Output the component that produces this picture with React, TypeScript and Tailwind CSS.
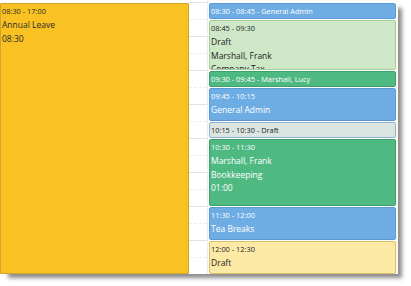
import React from "react";

type Appt = {
  slots: number;
  time: string;
  lines?: string[];
  inline?: string;
  tone: "blue" | "mint" | "green" | "mist" | "cream";
};

const tones = {
  blue: "bg-[#6eade4] border-[#5a98d6] text-white",
  mint: "bg-[#cde7c7] border-[#a0d098] text-[#1e1e1e]",
  green: "bg-[#4fb982] border-[#3f9f6b] text-white",
  mist: "bg-[#dbe5e1] border-[#8fb2d9] text-[#1e1e1e]",
  cream: "bg-[#fde9a6] border-[#d9bf68] text-[#1e1e1e]",
};

const appts: Appt[] = [
  { slots: 1, time: "08:30 - 08:45", inline: "General Admin", tone: "blue" },
  { slots: 3, time: "08:45 - 09:30", lines: ["Draft", "Marshall, Frank", "Company Tax"], tone: "mint" },
  { slots: 1, time: "09:30 - 09:45", inline: "Marshall, Lucy", tone: "green" },
  { slots: 2, time: "09:45 - 10:15", lines: ["General Admin", "00:30"], tone: "blue" },
  { slots: 1, time: "10:15 - 10:30", inline: "Draft", tone: "mist" },
  { slots: 4, time: "10:30 - 11:30", lines: ["Marshall, Frank", "Bookkeeping", "01:00"], tone: "green" },
  { slots: 2, time: "11:30 - 12:00", lines: ["Tea Breaks", "00:30"], tone: "blue" },
  { slots: 2, time: "12:00 - 12:30", lines: ["Draft", "Sick Leave"], tone: "cream" },
];

const heights: Record<number, string> = {
  1: "h-[16px]",
  2: "h-[33px]",
  3: "h-[50px]",
  4: "h-[67px]",
};

function Appointment({ a }: { a: Appt }) {
  return (
    <div
      className={`${tones[a.tone]} ${heights[a.slots]} mb-[1px] shrink-0 overflow-hidden rounded-[2px] border px-[1px]`}
    >
      {a.inline ? (
        <div className="text-[7.4px] leading-[14px] whitespace-nowrap">
          {a.time} - {a.inline}
        </div>
      ) : (
        <>
          <div className="text-[7.4px] leading-[14px] whitespace-nowrap">{a.time}</div>
          {a.lines?.map((l) => (
            <div key={l} className="text-[8.5px] leading-[13.5px] whitespace-nowrap">
              {l}
            </div>
          ))}
        </>
      )}
    </div>
  );
}

export default function App() {
  const rows = Array.from({ length: 17 }, (_, i) => i);
  return (
    <div className="h-[286px] w-[411px] bg-white font-['Open_Sans',sans-serif]">
      <div className="flex h-[274px] w-[398px] overflow-hidden bg-white shadow-[6px_6px_4px_-2px_rgba(0,0,0,0.45)]">
        {/* all-day style block */}
        <div className="w-[189px] shrink-0 pt-[3px]">
          <div className="h-full rounded-[1px] border border-[#cfa52a] bg-[#f9c222] px-[1px] text-[#2a2a2a]">
            <div className="text-[7.4px] leading-[14px]">08:30 - 17:00</div>
            <div className="text-[8.5px] leading-[13.5px]">Annual Leave</div>
            <div className="text-[8.5px] leading-[13.5px]">08:30</div>
          </div>
        </div>

        {/* time grid gutter */}
        <div className="w-[19px] shrink-0 border-r border-[#ececec] pt-[2px]">
          {rows.map((i) => (
            <div
              key={i}
              className={`h-[17px] border-t ${i % 2 === 0 ? "border-solid border-[#e2e2e2]" : "border-dashed border-[#ececec]"}`}
            />
          ))}
        </div>

        {/* appointments */}
        <div className="flex w-[188px] shrink-0 flex-col pt-[3px] pl-[1px]">
          {appts.map((a) => (
            <Appointment key={a.time} a={a} />
          ))}
        </div>
        <div className="flex-1 bg-[#fcf9ee]" />
      </div>
    </div>
  );
}
